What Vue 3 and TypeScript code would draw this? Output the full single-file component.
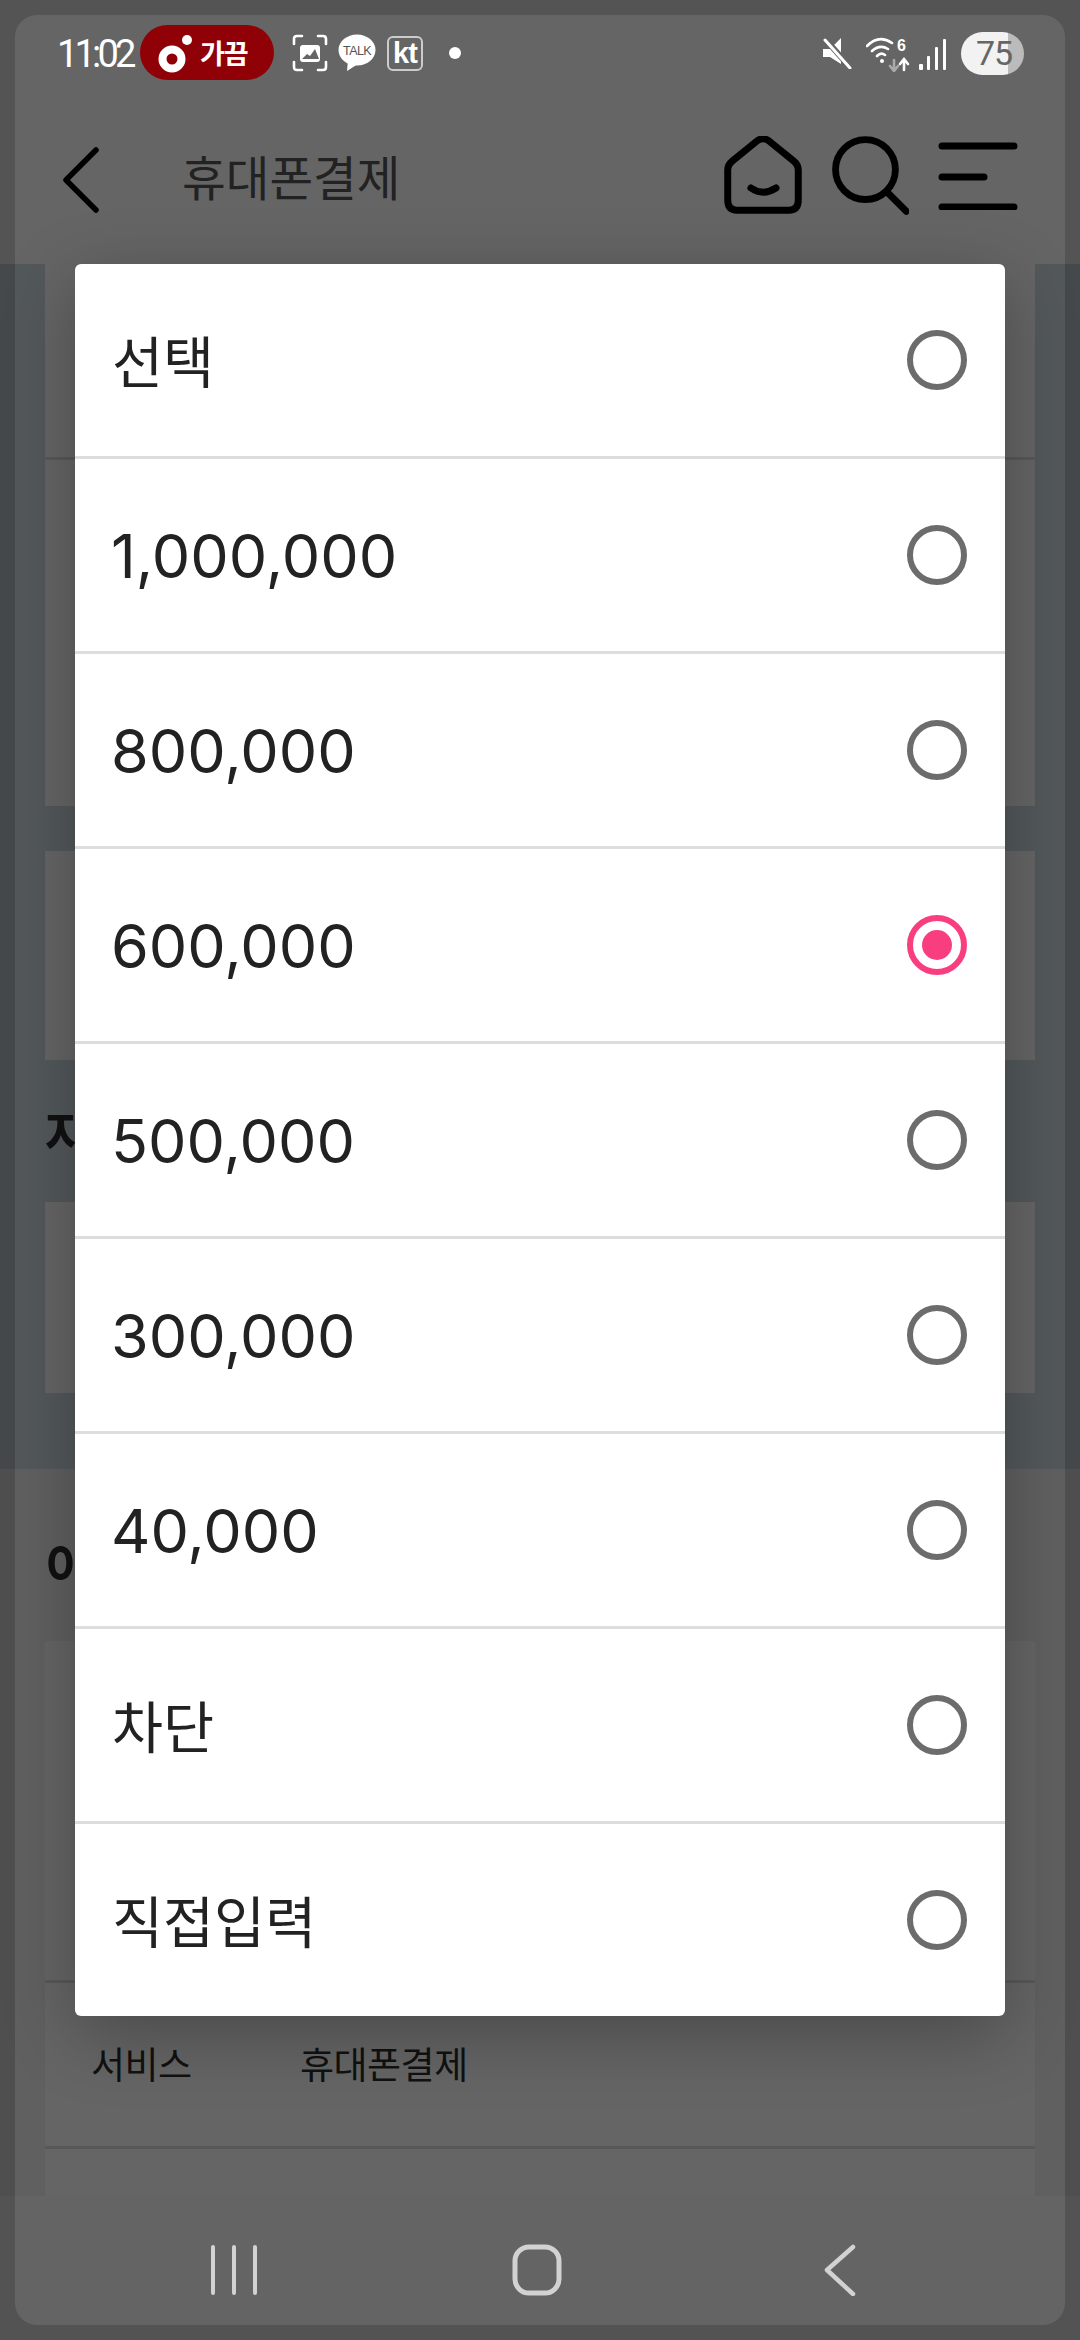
<template>
  <div class="screen">
    <header class="top">
      <div class="status">
        <span class="time">11:02</span>
        <span class="pill">
          <svg width="42" height="44" viewBox="0 0 42 44">
            <circle cx="17" cy="29" r="9.5" fill="none" stroke="#fff" stroke-width="8" />
            <circle cx="32" cy="10" r="5" fill="#fff" />
          </svg>
          <span class="pill-text">가끔</span>
        </span>
        <svg class="shot" width="36" height="38" viewBox="0 0 36 38" fill="none" stroke="#fff" stroke-width="2.6" stroke-linecap="round">
          <path d="M10 2H5Q2 2 2 5V10M26 2H31Q34 2 34 5V10M10 36H5Q2 36 2 33V28M26 36H31Q34 36 34 33V28" />
          <rect x="8" y="11" width="20" height="17" rx="3" fill="#fff" stroke="none" />
          <path d="M10 25L15 20L18 22L23 15L27 25Z" fill="#666" stroke="none" />
        </svg>
        <svg class="talk" width="38" height="38" viewBox="0 0 38 38">
          <ellipse cx="19" cy="16" rx="18.5" ry="15.5" fill="#fff" />
          <path d="M10 26L9 37L20 30Z" fill="#fff" />
          <text x="19" y="21" text-anchor="middle" class="talk-text">TALK</text>
        </svg>
        <span class="kt">kt</span>
        <span class="dot"></span>
        <div class="status-right">
          <svg width="30" height="32" viewBox="0 0 30 32">
            <path d="M1 12H8L19 1V27L8 20H1Z" fill="#fff" />
            <path d="M3 2L28 30" stroke="#666" stroke-width="6" />
            <path d="M3 3L28 31" stroke="#fff" stroke-width="3" stroke-linecap="round" />
          </svg>
          <svg class="wifi" width="44" height="36" viewBox="0 0 44 36" fill="none" stroke="#fff" stroke-width="2.6" stroke-linecap="round">
            <path d="M1 10Q13 -2 26 7M6 15Q14 8 22 13M11 20Q15 16 19 19" />
            <circle cx="16" cy="25" r="2" fill="#fff" stroke="none" />
            <path d="M28 24V34M24 30L28 35L32 30" stroke="#aaa" />
            <path d="M38 34V24M34 28L38 23L42 28" />
            <text x="31" y="15" class="wifi-text">6</text>
          </svg>
          <svg class="bars" width="28" height="32" viewBox="0 0 28 32" fill="#fff">
            <rect x="0" y="26" width="4" height="6" rx="1" />
            <rect x="8" y="18" width="3" height="14" rx="1" />
            <rect x="16" y="9" width="3" height="23" rx="1" />
            <rect x="24" y="1" width="3" height="31" rx="1" />
          </svg>
          <span class="battery"><span class="battery-level">75</span></span>
        </div>
      </div>
      <div class="appbar">
        <svg class="back" width="44" height="68" viewBox="0 0 44 68" fill="none" stroke="#000" stroke-width="5.5" stroke-linecap="round" stroke-linejoin="round">
          <path d="M36 4L6 34L36 64" />
        </svg>
        <h1 class="title">휴대폰결제</h1>
        <div class="actions">
          <svg width="78" height="78" viewBox="0 0 84 84" fill="none" stroke="#000" stroke-width="7.5" stroke-linecap="round" stroke-linejoin="round">
            <path d="M36 5Q42 1 48 5L75 27Q80 31 80 37V69Q80 80 70 80H14Q4 80 4 69V37Q4 31 9 27Z" />
            <path d="M29 56Q42 65 56 56" />
          </svg>
          <svg width="78" height="80" viewBox="0 0 86 88" fill="none" stroke="#000" stroke-width="7.5" stroke-linecap="round">
            <circle cx="38" cy="38" r="33" />
            <path d="M62 63L83 84" />
          </svg>
          <svg width="80" height="70" viewBox="0 0 80 70" fill="none" stroke="#000" stroke-width="7" stroke-linecap="round">
            <path d="M4 6H76M4 37H46M4 67H76" />
          </svg>
        </div>
      </div>
    </header>

    <section class="band band-blue">
      <div class="card card-first">
        <div class="card-row row-a"></div>
        <div class="card-row"></div>
      </div>
      <div class="card card-second"></div>
      <h2 class="heading heading-blue">자</h2>
      <div class="card card-third"></div>
    </section>

    <section class="band band-gray">
      <h2 class="heading heading-gray">이</h2>
      <div class="card">
        <div class="card-row row-b"></div>
        <div class="card-row row-c">
          <span class="label">서비스</span>
          <span class="value">휴대폰결제</span>
        </div>
        <div class="card-row row-d"></div>
      </div>
    </section>

    <nav class="nav">
      <svg width="70" height="52" viewBox="0 0 70 52" fill="none" stroke="#d2d2d2" stroke-width="4" stroke-linecap="round">
        <path d="M14 3V49M35 3V49M56 3V49" />
      </svg>
      <svg width="70" height="52" viewBox="0 0 70 52" fill="none" stroke="#d2d2d2" stroke-width="5">
        <rect x="13" y="3" width="44" height="46" rx="14" />
      </svg>
      <svg width="70" height="52" viewBox="0 0 70 52" fill="none" stroke="#d2d2d2" stroke-width="4.5" stroke-linecap="round" stroke-linejoin="round">
        <path d="M48 3L22 26L48 50" />
      </svg>
    </nav>

    <div class="edge"></div>

    <div class="dialog">
      <div v-for="item in items" :key="item" class="option">
        <span :class="['option-text', { hangul: isHangul(item) }]">{{ item }}</span>
        <span :class="['radio', { checked: item === selected }]"></span>
      </div>
    </div>
  </div>
</template>

<script setup lang="ts">
import { ref } from 'vue'

const items = ['선택', '1,000,000', '800,000', '600,000', '500,000', '300,000', '40,000', '차단', '직접입력']
const selected = ref('600,000')

const isHangul = (item: string) => !/^\d/.test(item)
</script>

<style>
body {
  background: #555;
}
</style>

<style scoped>
.screen {
  position: relative;
  width: 1080px;
  height: 2340px;
  overflow: hidden;
  display: flex;
  flex-direction: column;
  font-family: Inter, "Noto Sans CJK KR", sans-serif;
  color: #222;
}

.top {
  height: 264px;
  background: #656565;
}

.status {
  height: 106px;
  display: flex;
  align-items: center;
  padding-left: 57px;
  padding-right: 56px;
  color: #fff;
}

.time {
  width: 83px;
  font-family: Roboto, sans-serif;
  font-size: 38px;
  letter-spacing: -3.8px;
  margin-top: 2px;
}

.pill {
  width: 134px;
  height: 55px;
  box-sizing: border-box;
  border-radius: 28px;
  background: #8f0007;
  display: flex;
  align-items: center;
  padding-left: 15px;
  margin-top: -2px;
}

.pill-text {
  font-family: "Noto Sans CJK KR", sans-serif;
  font-size: 27px;
  font-weight: 700;
  margin-left: 3px;
  letter-spacing: -1px;
}

.shot {
  margin-left: 18px;
}

.talk {
  margin-left: 10px;
}

.talk-text {
  font-family: "Liberation Sans", sans-serif;
  font-size: 12.5px;
  fill: #555;
  letter-spacing: -0.6px;
}

.kt {
  width: 36px;
  height: 35px;
  margin-left: 11px;
  border: 2px solid #ccc;
  border-radius: 6px;
  box-sizing: border-box;
  display: flex;
  align-items: center;
  justify-content: center;
  font-family: "Liberation Sans", sans-serif;
  font-size: 29px;
  font-weight: 700;
  letter-spacing: -1px;
}

.dot {
  width: 12px;
  height: 12px;
  border-radius: 50%;
  background: #fff;
  margin-left: 26px;
}

.status-right {
  margin-left: auto;
  display: flex;
  align-items: center;
}

.wifi {
  margin-left: 14px;
  margin-top: 2px;
}

.wifi-text {
  font-family: "Liberation Sans", sans-serif;
  font-size: 16px;
  font-weight: 700;
  fill: #fff;
  stroke: none;
}

.bars {
  margin-left: 9px;
  margin-top: 2px;
}

.battery {
  width: 63px;
  height: 43px;
  margin-left: 14px;
  border-radius: 22px;
  background: linear-gradient(to right, #f2f2f2 47px, #bbb 47px);
  display: flex;
  align-items: center;
  padding-left: 15px;
  box-sizing: border-box;
}

.battery-level {
  font-family: Roboto, sans-serif;
  font-size: 34px;
  color: #666;
  letter-spacing: -1px;
}

.appbar {
  height: 158px;
  display: flex;
  align-items: center;
  padding-left: 60px;
  padding-right: 62px;
}

.back {
  margin-top: -10px;
}

.title {
  margin: -20px 0 0 78px;
  font-family: "Noto Sans CJK KR", sans-serif;
  font-size: 47.5px;
  font-weight: 400;
  color: #222;
}

.actions {
  margin-left: auto;
  margin-top: -20px;
  display: flex;
  align-items: center;
  gap: 29px;
}

.band {
  padding: 0 45px;
}

.band-blue {
  height: 1205px;
  background: #53585b;
}

.band-gray {
  height: 727px;
  padding-top: 64px;
  box-sizing: border-box;
  background: #606060;
}

.card {
  background: #656565;
}

.card-first {
  height: 542px;
  margin-bottom: 45px;
}

.card-second {
  height: 209px;
}

.card-third {
  height: 191px;
}

.card-row {
  display: flex;
  align-items: center;
  box-sizing: border-box;
  border-bottom: 3px solid #585858;
}

.card-row:last-child {
  border-bottom: none;
}

.row-a {
  height: 196px;
}

.row-b {
  height: 342px;
}

.row-c {
  height: 166px;
  padding-left: 46px;
  padding-bottom: 4px;
  font-family: "Noto Sans CJK KR", sans-serif;
  font-size: 37px;
  color: #111;
}

.row-d {
  height: 47px;
}

.label {
  width: 209px;
  letter-spacing: -0.6px;
}

.value {
  letter-spacing: -0.5px;
}

.heading {
  margin: 0;
  font-family: "Noto Sans CJK KR", sans-serif;
  font-size: 50px;
  font-weight: 700;
  color: #111;
}

.heading-blue {
  height: 142px;
  display: flex;
  align-items: center;
}

.heading-gray {
  height: 60px;
  line-height: 60px;
  margin-bottom: 48px;
}

.nav {
  flex: 1;
  background: #646464;
  display: flex;
  justify-content: space-between;
  align-items: flex-start;
  padding: 48px 205px 0 199px;
}

.edge {
  position: absolute;
  inset: 15px;
  border-radius: 22px;
  box-shadow: 0 0 0 30px rgba(0, 0, 0, 0.17);
}

.dialog {
  position: absolute;
  left: 75px;
  top: 264px;
  width: 930px;
  height: 1752px;
  border-radius: 6px;
  background: #fff;
  box-shadow: 0 18px 70px rgba(0, 0, 0, 0.28);
  display: grid;
  grid-template-rows: repeat(8, 195px) 1fr;
}

.option {
  display: flex;
  align-items: center;
  justify-content: space-between;
  padding: 0 38px 0 37px;
  border-bottom: 3px solid #ddd;
}

.option:last-child {
  border-bottom: none;
}

.option-text {
  font-size: 61px;
  line-height: 1;
  color: #222;
  margin-top: 3px;
  margin-left: -1px;
}

.option-text.hangul {
  font-size: 55.5px;
  margin-top: 6px;
  margin-left: 0;
}

.radio {
  width: 60px;
  height: 60px;
  box-sizing: border-box;
  border: 6px solid #6c6c6c;
  border-radius: 50%;
  display: flex;
  align-items: center;
  justify-content: center;
}

.radio.checked {
  border-color: #f93e7f;
}

.radio.checked::after {
  content: "";
  width: 30px;
  height: 30px;
  border-radius: 50%;
  background: #f93e7f;
}
</style>
